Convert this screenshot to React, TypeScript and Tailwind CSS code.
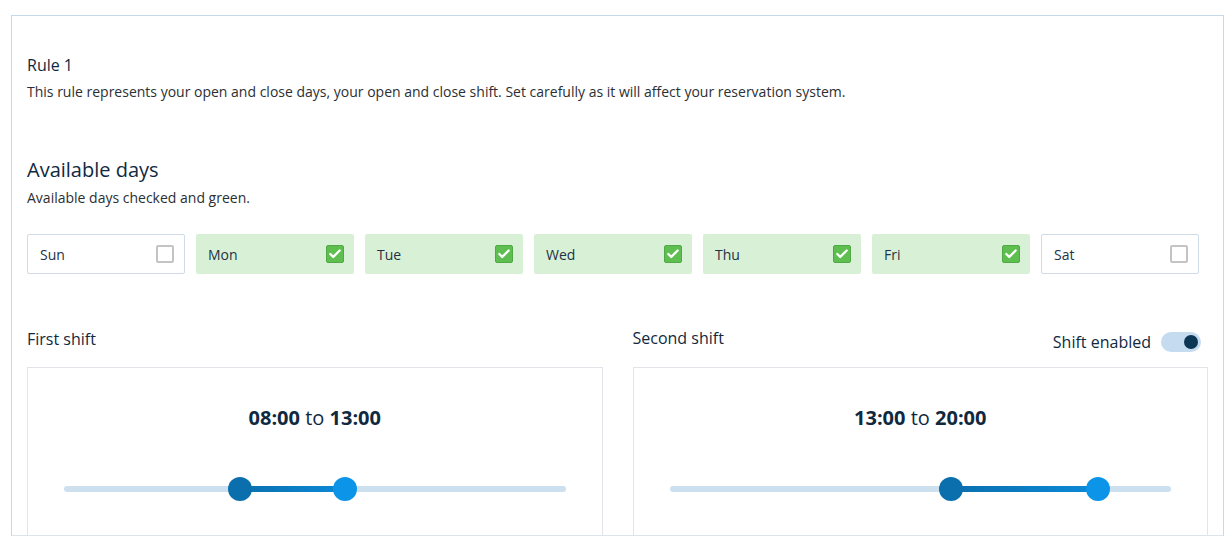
import { Check } from 'lucide-react';

const days = [
  { label: 'Sun', on: false },
  { label: 'Mon', on: true },
  { label: 'Tue', on: true },
  { label: 'Wed', on: true },
  { label: 'Thu', on: true },
  { label: 'Fri', on: true },
  { label: 'Sat', on: false },
];

// px along the track for a given hour (track is ~504px wide)
const pos = (h: number) => 8 + h * 21;

function ShiftCard({ from, to }: { from: number; to: number }) {
  const a = pos(from);
  const b = pos(to);
  const fmt = (h: number) => `${String(h).padStart(2, '0')}:00`;
  return (
    <div className="h-[200px] border border-[#e1e5e9] px-[36px] pt-[36px]">
      <p className="text-center text-[20px] leading-[28px] text-[#10293f]">
        <span className="font-bold">{fmt(from)}</span> to <span className="font-bold">{fmt(to)}</span>
      </p>
      <div className="relative mt-[45px] h-6">
        <div className="absolute left-0 right-0 top-[9px] h-[6px] rounded-full bg-[#cde0ef]" />
        <div
          className="absolute top-[9px] h-[6px] bg-gradient-to-r from-[#0a6fae] to-[#0b8ad8]"
          style={{ left: a, width: b - a }}
        />
        <div
          className="absolute top-0 h-6 w-6 -translate-x-1/2 rounded-full bg-[#0b6fae]"
          style={{ left: a }}
        />
        <div
          className="absolute top-0 h-6 w-6 -translate-x-1/2 rounded-full bg-[#0c95e8]"
          style={{ left: b }}
        />
      </div>
    </div>
  );
}

export default function App() {
  return (
    <div
      className="h-[542px] w-full overflow-hidden bg-white pl-[11px] pr-[8px] pt-[15px]"
      style={{ fontFamily: '"Open Sans", "Noto Sans", sans-serif' }}
    >
      <div className="h-[521px] overflow-hidden border border-[#c6d9ea] border-b-[#dbe3eb] px-[15px] pt-[38px]">
        <h2 className="text-[16px] leading-[22px] text-[#10293f]">Rule 1</h2>
        <p className="mt-[6px] text-[14px] leading-[20px] text-[#2b2f33]">
          This rule represents your open and close days, your open and close shift. Set carefully as it will affect your reservation system.
        </p>

        <h3 className="mt-[54px] text-[20px] leading-[28px] text-[#10293f]">Available days</h3>
        <p className="mt-[4px] text-[14px] leading-[20px] text-[#2b2f33]">Available days checked and green.</p>

        <div className="mt-[26px] grid w-[1172px] grid-cols-7 gap-[11px]">
          {days.map(d => (
            <div
              key={d.label}
              className={`flex h-10 items-center justify-between rounded-[2px] pl-3 pr-[10px] text-[14px] text-[#1d3246] ${
                d.on ? 'bg-[#d8f1d6]' : 'border border-[#cfdbe7] bg-white'
              }`}
            >
              <span>{d.label}</span>
              {d.on ? (
                <span className="flex h-[18px] w-[18px] items-center justify-center rounded-[2px] border border-[#4faa45] bg-[#5fbe50]">
                  <Check className="h-[14px] w-[14px] text-white" strokeWidth={4} />
                </span>
              ) : (
                <span className="h-[18px] w-[18px] rounded-[2px] border-2 border-[#c4c4c4] bg-white" />
              )}
            </div>
          ))}
        </div>

        <div className="mt-[53px] grid w-[1181px] grid-cols-2 gap-[30px]">
          <div>
            <div className="h-[40px]">
              <span className="text-[16px] leading-[22px] text-[#10293f]">First shift</span>
            </div>
            <ShiftCard from={8} to={13} />
          </div>
          <div>
            <div className="flex h-[40px] items-start justify-between">
              <span className="text-[16px] leading-[22px] text-[#10293f]">Second shift</span>
              <div className="mr-[7px] mt-[5px] flex h-5 items-center gap-[10px]">
                <span className="text-[16px] text-[#10293f]">Shift enabled</span>
                <span className="flex h-5 w-10 items-center justify-end rounded-full bg-[#c5dcf0] pr-[3px]">
                  <span className="h-[14px] w-[14px] rounded-full bg-[#0c3656]" />
                </span>
              </div>
            </div>
            <ShiftCard from={13} to={20} />
          </div>
        </div>
      </div>
    </div>
  );
}
